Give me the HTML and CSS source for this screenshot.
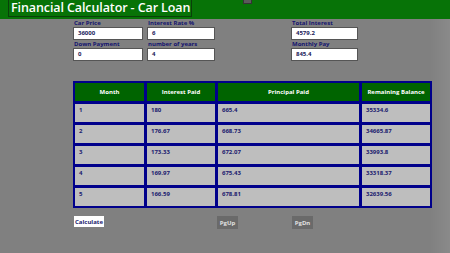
FILE: index.html
```html
<!DOCTYPE html>
<html>
<head>
<meta charset="utf-8">
<link rel="stylesheet" href="styles.css">
</head>
<body>
<header class="topbar">
  <div class="title">Financial Calculator - Car Loan</div>
  <div class="chip"></div>
</header>
<section class="form">
  <div class="col c1">
    <div class="field"><div class="label">Car Price</div><div class="input">36000</div></div>
    <div class="field"><div class="label">Down Payment</div><div class="input">0</div></div>
  </div>
  <div class="col c2">
    <div class="field"><div class="label">Interest Rate %</div><div class="input">6</div></div>
    <div class="field"><div class="label">number of years</div><div class="input">4</div></div>
  </div>
  <div class="col c3">
    <div class="field"><div class="label">Total Interest</div><div class="input">4579.2</div></div>
    <div class="field"><div class="label">Monthly Pay</div><div class="input">845.4</div></div>
  </div>
</section>
<section class="table">
  <div class="th">Month</div><div class="th">Interest Paid</div><div class="th">Principal Paid</div><div class="th">Remaining Balance</div>
  <div class="td">1</div><div class="td">180</div><div class="td">665.4</div><div class="td">35334.6</div>
  <div class="td">2</div><div class="td">176.67</div><div class="td">668.73</div><div class="td">34665.87</div>
  <div class="td">3</div><div class="td">173.33</div><div class="td">672.07</div><div class="td">33993.8</div>
  <div class="td">4</div><div class="td">169.97</div><div class="td">675.43</div><div class="td">33318.37</div>
  <div class="td">5</div><div class="td">166.59</div><div class="td">678.81</div><div class="td">32639.56</div>
</section>
<section class="buttons">
  <div class="btn calc">Calculate</div>
  <div class="btn pg pgup">PgUp</div>
  <div class="btn pg pgdn">PgDn</div>
</section>
</body>
</html>
```
FILE: styles.css
```css
html, body {
  margin: 0;
  padding: 0;
}
body {
  width: 450px;
  height: 253px;
  overflow: hidden;
  background: linear-gradient(to right, #808080 0, #808080 430px, #8a8a8a 450px);
  font-family: "Open Sans", "Noto Sans", sans-serif;
  position: relative;
}
.topbar {
  height: 19px;
  background: #077307;
  display: flex;
  align-items: flex-start;
}
.title {
  margin-left: 8px;
  height: 17px;
  box-sizing: border-box;
  border: 1px solid #0a3f0a;
  border-top: none;
  padding: 0 1px 0 2px;
  color: #ffffff;
  font-weight: 600;
  font-size: 12.5px;
  line-height: 15px;
  white-space: nowrap;
  letter-spacing: -0.1px;
}
.chip {
  position: absolute;
  left: 243px;
  top: 0;
  width: 9px;
  height: 4px;
  background: #5a5a5a;
  border: 1px solid #333;
  border-top: none;
  box-sizing: border-box;
}
.form {
  display: flex;
  padding-top: 1px;
  padding-left: 73px;
}
.col {
  display: flex;
  flex-direction: column;
}
.c1 { width: 70px; }
.c2 { width: 68px; margin-left: 4px; }
.c3 { width: 67px; margin-left: 76px; }
.field {
  display: flex;
  flex-direction: column;
  margin-bottom: 1px;
}
.label {
  height: 7px;
  line-height: 7px;
  font-size: 6px;
  font-weight: 700;
  color: #14146e;
  padding-left: 1px;
  white-space: nowrap;
}
.input {
  height: 13px;
  box-sizing: border-box;
  background: #ffffff;
  border: 1px solid #555555;
  font-size: 6px;
  font-weight: 700;
  color: #1a1a5a;
  line-height: 11px;
  padding-left: 4px;
}
.table {
  margin: 19px 0 0 73px;
  width: 359px;
  box-sizing: border-box;
  background: #00008b;
  padding: 2px;
  display: grid;
  grid-template-columns: 69px 68px 141px 68px;
  grid-template-rows: 18px repeat(5, 18px);
  gap: 3px;
}
.th {
  background: #006400;
  color: #ffffff;
  font-size: 6px;
  font-weight: 700;
  display: flex;
  align-items: center;
  justify-content: center;
}
.td {
  background: #bebebe;
  color: #1a1a6e;
  font-size: 6px;
  font-weight: 700;
  padding: 2px 0 0 4px;
  line-height: 8px;
}
.buttons {
  display: flex;
  align-items: flex-start;
  margin-top: 8px;
  padding-left: 74px;
}
.btn {
  font-size: 6px;
  font-weight: 700;
  display: flex;
  align-items: center;
  justify-content: center;
}
.calc {
  width: 30px;
  height: 11px;
  background: #ffffff;
  color: #1a1a6e;
}
.pg {
  width: 21px;
  height: 13px;
  background: #6a6a6a;
  color: #e0e0e0;
}
.pgup { margin-left: 113px; }
.pgdn { margin-left: 54px; }
```
